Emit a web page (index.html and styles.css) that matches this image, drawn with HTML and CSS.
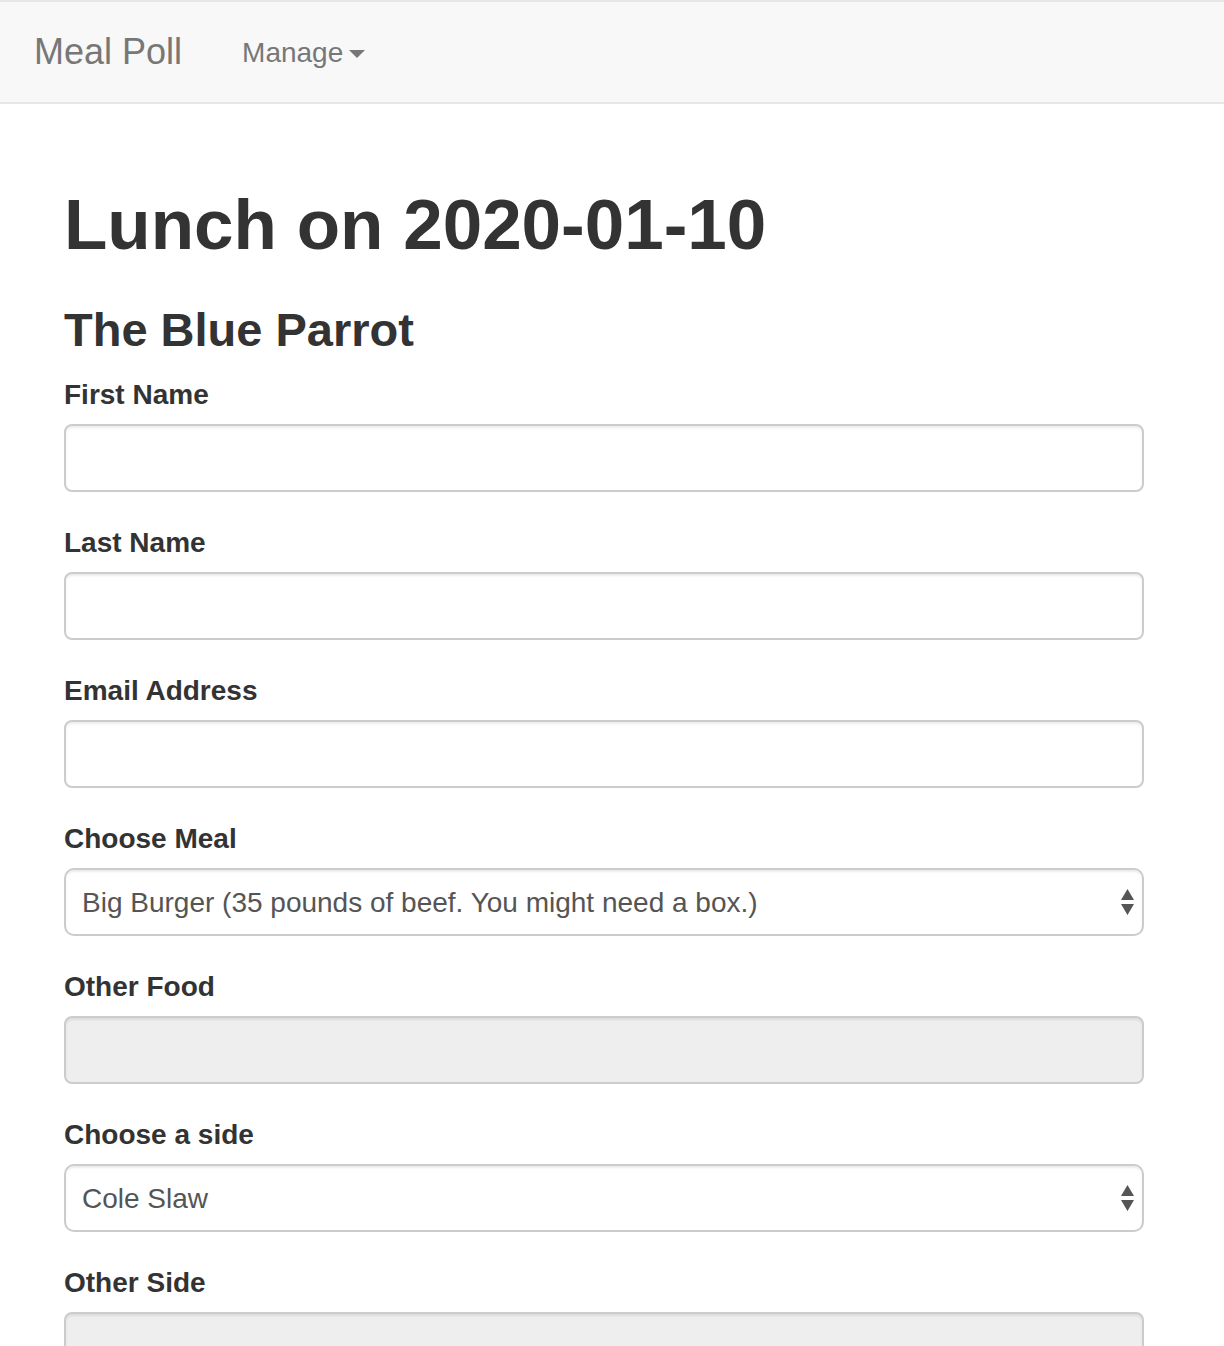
FILE: index.html
```html
<!DOCTYPE html>
<html lang="en">
<head>
  <meta charset="utf-8">
  <meta name="viewport" content="width=device-width, initial-scale=1">
  <title>Meal Poll</title>
  <link rel="stylesheet" href="styles.css">
</head>
<body>
  <nav class="navbar">
    <a class="navbar-brand" href="#">Meal Poll</a>
    <button class="navbar-menu" type="button" aria-haspopup="true">Manage<span class="caret"></span></button>
  </nav>
  <main class="container">
    <h1 class="title">Lunch on 2020-01-10</h1>
    <h2 class="subtitle">The Blue Parrot</h2>
    <form class="form">
      <div class="form-group">
        <label class="label" for="first-name">First Name</label>
        <input class="control" type="text" id="first-name">
      </div>
      <div class="form-group">
        <label class="label" for="last-name">Last Name</label>
        <input class="control" type="text" id="last-name">
      </div>
      <div class="form-group">
        <label class="label" for="email">Email Address</label>
        <input class="control" type="email" id="email">
      </div>
      <div class="form-group">
        <label class="label" for="meal">Choose Meal</label>
        <select class="control control-select" id="meal">
          <option>Big Burger (35 pounds of beef. You might need a box.)</option>
        </select>
      </div>
      <div class="form-group">
        <label class="label" for="other-food">Other Food</label>
        <input class="control" type="text" id="other-food" disabled>
      </div>
      <div class="form-group">
        <label class="label" for="side">Choose a side</label>
        <select class="control control-select" id="side">
          <option>Cole Slaw</option>
        </select>
      </div>
      <div class="form-group">
        <label class="label" for="other-side">Other Side</label>
        <input class="control" type="text" id="other-side" disabled>
      </div>
    </form>
  </main>
</body>
</html>
```
FILE: styles.css
```css
* {
  box-sizing: border-box;
}

body {
  margin: 0;
  height: 100vh;
  overflow: hidden;
  background: #fff;
  color: #333;
  font-family: "Liberation Sans", Arial, sans-serif;
  font-size: 28px;
  line-height: 40px;
}

.navbar {
  display: flex;
  align-items: center;
  gap: 60px;
  padding: 29px 34px;
  border-top: 2px solid #e7e7e7;
  border-bottom: 2px solid #e7e7e7;
  background: #f8f8f8;
}

.navbar-brand {
  color: #777;
  font-size: 36px;
  text-decoration: none;
}

.navbar-menu {
  display: flex;
  align-items: center;
  gap: 6px;
  padding: 2px 0 0;
  border: 0;
  background: none;
  color: #777;
  font: inherit;
}

.caret {
  margin-top: 2px;
  border-top: 8px solid currentColor;
  border-right: 8px solid transparent;
  border-left: 8px solid transparent;
}

.container {
  padding: 80px 80px 0 64px;
}

.title {
  margin: 0 0 38px;
  font-size: 71px;
  line-height: 82px;
}

.subtitle {
  margin: 0 0 18px;
  font-size: 47px;
  line-height: 52px;
}

.form {
  display: flex;
  flex-direction: column;
  gap: 30px;
}

.form-group {
  display: flex;
  flex-direction: column;
  gap: 8px;
}

.label {
  font-weight: 700;
  line-height: 42px;
}

.control {
  width: 100%;
  height: 68px;
  padding: 13px 16px 11px;
  border: 2px solid #ccc;
  border-radius: 8px;
  background-color: #fff;
  box-shadow: inset 0 2px 2px rgba(0, 0, 0, 0.075);
  color: #555;
  font: inherit;
}

.control:disabled {
  background-color: #eee;
}

.control-select {
  appearance: none;
  border-radius: 10px;
  background-image: url("data:image/svg+xml,%3Csvg xmlns='http://www.w3.org/2000/svg' width='13' height='26' viewBox='0 0 13 26'%3E%3Cpath d='M6.5 0L13 11H0zM0 15h13L6.500 26z' fill='%23555'/%3E%3C/svg%3E");
  background-repeat: no-repeat;
  background-position: right 8px center;
}
```
